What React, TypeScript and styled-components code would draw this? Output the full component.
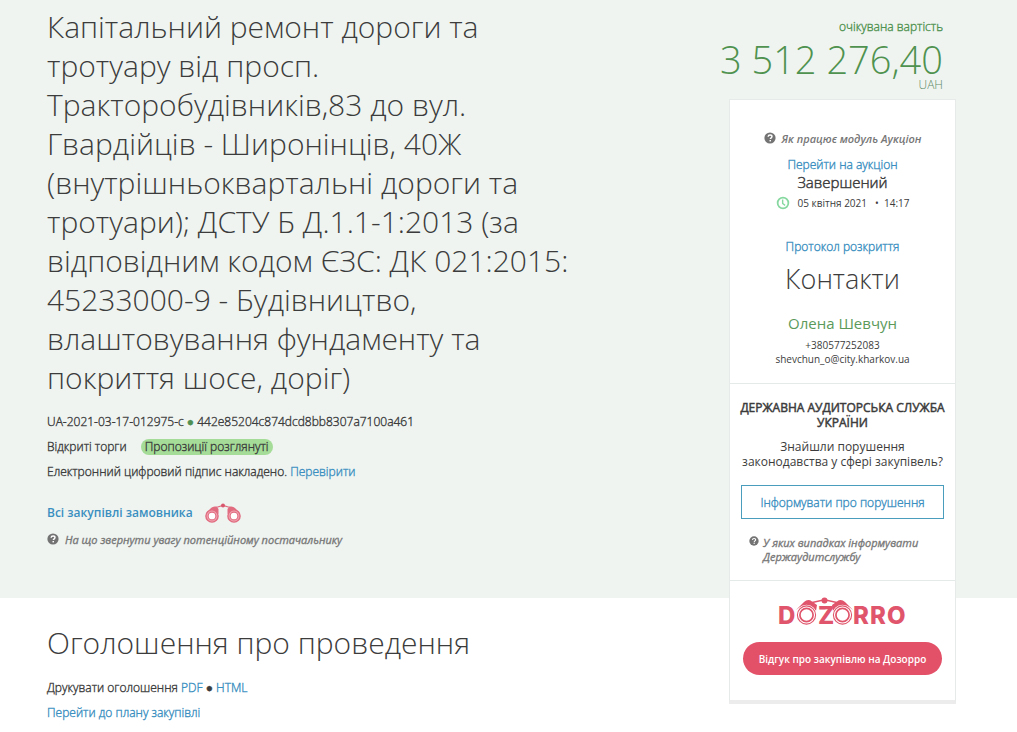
import React from "react";
import styled, { createGlobalStyle, css } from "styled-components";

const GlobalStyle = createGlobalStyle`
  *, *::before, *::after { box-sizing: border-box; }
  body {
    margin: 0;
    background: #fff;
    color: #3c3c3c;
    font: 300 12px/20px "Open Sans", "Noto Sans", sans-serif;
  }
`;

/* light text that has to stay readable at small sizes */
const smallLight = css`
  font-weight: 300;
  -webkit-text-stroke: 0.03em;
`;

const Page = styled.div`
  display: grid;
  grid-template-columns: minmax(0, 1fr) 227px;
  grid-template-rows: auto 1fr;
  column-gap: 160px;
  padding: 0 61px 0 47px;
`;

const HeroBand = styled.div`
  grid-area: 1 / 1 / 2 / 3;
  margin: 0 -61px 0 -47px;
  background: #eff4f1;
`;

const Hero = styled.header`
  grid-area: 1 / 1;
  padding: 7px 0 47px;
`;

const Title = styled.h1`
  margin: 0 0 15px;
  font-size: 30px;
  line-height: 39px;
  font-weight: 300;
`;

const Line = styled.p`
  ${smallLight}
  margin: 0 0 5px;
`;

const Link = styled.a`
  ${smallLight}
  color: #3a8fc0;
  text-decoration: none;
`;

const BuyerLink = styled.a`
  color: #3a8fc0;
  font-weight: 600;
  text-decoration: none;
`;

const Bullet = styled.span<{ $green?: boolean }>`
  color: ${(p) => (p.$green ? "#4f8f52" : "inherit")};
`;

const Status = styled.span`
  display: inline-block;
  margin-left: 11px;
  padding: 0 4px;
  border-radius: 8px;
  background: #a4dc98;
  line-height: 16px;
`;

const BuyerRow = styled.div`
  display: flex;
  align-items: center;
  gap: 12px;
  margin: 19px 0 6px;
  height: 24px;
`;

const Hint = styled.a<{ $inset?: boolean; $strong?: boolean }>`
  display: inline-flex;
  align-items: flex-start;
  gap: ${(p) => (p.$inset ? "4px" : "6px")};
  padding-left: ${(p) => (p.$inset ? "8px" : "0")};
  color: #777;
  font-size: 11px;
  line-height: 14px;
  font-style: italic;
  font-weight: ${(p) => (p.$strong ? 600 : 400)};
  -webkit-text-stroke: ${(p) => (p.$strong ? "0" : "0.03em")};
  text-align: left;
  text-decoration: none;
  svg { flex: none; }
`;

const Announcement = styled.section`
  grid-area: 2 / 1;
  padding: 25px 0 8px;
`;

const SectionTitle = styled.h2`
  margin: 0 0 15px;
  font-size: 30px;
  line-height: 40px;
  font-weight: 300;
`;

const Aside = styled.aside`
  grid-area: 1 / 2 / 3 / 3;
`;

const Price = styled.div`
  padding: 17px 13px 6px 0;
  display: flex;
  flex-direction: column;
  align-items: flex-end;
  color: #4f924f;
  white-space: nowrap;
`;

const PriceLabel = styled.span`
  ${smallLight}
`;

const Amount = styled.strong`
  font-size: 38px;
  line-height: 44px;
  font-weight: 300;
  margin-bottom: -4px;
`;

const Currency = styled.span`
  color: #5f8a66;
  line-height: 16px;
`;

const Card = styled.div`
  background: #fff;
  border: 1px solid #e6eae8;
  border-bottom: 4px solid #ececec;
  text-align: center;
`;

const CardPart = styled.section<{ $pad: string }>`
  padding: ${(p) => p.$pad};
  & + & { border-top: 1px solid #e4eae7; }
`;

const AuctionLink = styled.div`
  margin-top: 5px;
`;

const State = styled.div`
  ${smallLight}
  font-size: 15px;
  line-height: 14px;
`;

const Time = styled.div`
  display: flex;
  align-items: center;
  justify-content: center;
  gap: 8px;
  margin: 4px 0 24px;
  font-size: 10px;
  line-height: 20px;
  font-weight: 400;
`;

const ContactsTitle = styled.h3`
  margin: 4px 0 16px;
  font-size: 27px;
  line-height: 36px;
  font-weight: 300;
`;

const Person = styled.div`
  margin-bottom: 5px;
  color: #5b9a5b;
  font-size: 15px;
  line-height: 20px;
  font-weight: 400;
`;

const Small = styled.div`
  font-size: 10px;
  line-height: 14px;
  font-weight: 400;
`;

const AuditTitle = styled.h4`
  margin: 0 -4px 9px;
  font-size: 12px;
  line-height: 15px;
  font-weight: 400;
  -webkit-text-stroke: 0.04em;
`;

const AuditText = styled.p`
  margin: 0 0 16px;
  line-height: 15px;
  font-weight: 400;
`;

const buttonBase = css`
  display: block;
  width: 100%;
  padding: 0;
  font-family: inherit;
  cursor: pointer;
`;

const OutlineButton = styled.button`
  ${buttonBase}
  ${smallLight}
  height: 34px;
  margin-bottom: 13px;
  border: 1px solid #4a9dbd;
  background: #fff;
  color: #3a8fc0;
  font-size: 12px;
`;

const ReviewButton = styled.button`
  ${buttonBase}
  height: 33px;
  margin-top: 9px;
  border: 0;
  border-radius: 17px;
  background: #e35168;
  color: #fff;
  font-size: 10px;
  font-weight: 600;
`;

const Logo = styled.svg`
  display: block;
  margin: 0 auto;
`;

const QuestionIcon = ({ size = 12 }: { size?: number }) => (
  <svg width={size} height={size} viewBox="0 0 12 12" aria-hidden="true">
    <circle cx="6" cy="6" r="5.6" fill="#737373" />
    <path d="M4.1 4.7C4.2 3.5 5 3 6.1 3c1.2 0 1.9.7 1.9 1.6 0 1.2-1.7 1.3-1.7 2.5" fill="none" stroke="#fff" strokeWidth="1.4" />
    <rect x="5.5" y="8" width="1.5" height="1.4" fill="#fff" />
  </svg>
);

const ClockIcon = () => (
  <svg width="14" height="14" viewBox="0 0 12 12" aria-hidden="true">
    <circle cx="6" cy="6" r="4.6" fill="none" stroke="#86d8a0" strokeWidth="1.5" />
    <path d="M5.7 3v3.4l2.1 1.6" fill="none" stroke="#86d8a0" strokeWidth="1.2" />
  </svg>
);

const Binoculars = () => (
  <svg width="36" height="20" viewBox="0 0 36 20" aria-hidden="true">
    <path d="M1.5 10 6 5Q8 2.8 11.5 3.6L13.5 6 13.5 11Q7 4 1.5 10ZM34.5 10 30 5Q28 2.8 24.5 3.6L22.5 6 22.5 11Q29 4 34.5 10Z" fill="#e16c80" />
    <path d="M11 4.500 18 2.400l7 2.100" fill="none" stroke="#e16c80" strokeWidth="1.3" />
    <circle cx="18" cy="2.6" r="2" fill="#d9576d" />
    <g stroke="#e16c80">
      <circle cx="7" cy="13" r="6.1" fill="#f2a9b4" strokeWidth="1.4" />
      <circle cx="29" cy="13" r="6.1" fill="#f2a9b4" strokeWidth="1.4" />
      <circle cx="7" cy="13" r="3.9" fill="#fff" strokeWidth="1.1" />
      <circle cx="29" cy="13" r="3.9" fill="#fff" strokeWidth="1.1" />
    </g>
  </svg>
);

const DozorroLogo = () => (
  <Logo width="132" height="36" viewBox="-2 0 132 36" role="img" aria-label="DOZORRO">
    <g fill="#e0556b" fontFamily="Inter, sans-serif" fontWeight="800" fontSize="24">
      <text x="-1" y="27">D</text>
      <text x="39" y="27">Z</text>
      <text x="74" y="27">R</text>
      <text x="91" y="27">R</text>
      <text x="108" y="27">O</text>
    </g>
    <path d="M17 13 25 5Q29 1.500 33 4.500L38 8 37 14Q27 4 17 13ZM74 13 66 5Q62 1.500 58 4.500L53 8 54 14Q64 4 74 13Z" fill="#e0556b" />
    <path d="M31 6 45.500 2.700 60 6" fill="none" stroke="#e0556b" strokeWidth="1.4" />
    <circle cx="45.5" cy="3.4" r="3" fill="#e0556b" />
    <g fill="#fff" stroke="#e0556b">
      <circle cx="27.5" cy="18" r="9.3" stroke="#fff" strokeWidth="2" />
      <circle cx="63.5" cy="18" r="9.3" stroke="#fff" strokeWidth="2" />
      <circle cx="27.5" cy="18" r="9.1" strokeWidth="1.1" />
      <circle cx="63.5" cy="18" r="9.1" strokeWidth="1.1" />
      <circle cx="27.5" cy="18" r="6.6" strokeWidth="1.7" />
      <circle cx="63.5" cy="18" r="6.6" strokeWidth="1.7" />
    </g>
  </Logo>
);

export default function App() {
  return (
    <>
      <GlobalStyle />
      <Page>
        <HeroBand />
        <Hero>
          <Title>
            Капітальний ремонт дороги та тротуару від просп. Тракторобудівників,83 до вул. Гвардійців - Широнінців, 40Ж
            (внутрішньоквартальні дороги та тротуари); ДСТУ Б Д.1.1-1:2013 (за відповідним кодом ЄЗС: ДК 021:2015:
            45233000-9 - Будівництво, влаштовування фундаменту та покриття шосе, доріг)
          </Title>
          <Line>
            UA-2021-03-17-012975-c <Bullet $green>●</Bullet> 442e85204c874dcd8bb8307a7100a461
          </Line>
          <Line>
            Відкриті торги <Status>Пропозиції розглянуті</Status>
          </Line>
          <Line>
            Електронний цифровий підпис накладено. <Link href="#verify">Перевірити</Link>
          </Line>
          <BuyerRow>
            <BuyerLink href="#buyer">Всі закупівлі замовника</BuyerLink>
            <Binoculars />
          </BuyerRow>
          <Hint href="#supplier-hints">
            <QuestionIcon />
            На що звернути увагу потенційному постачальнику
          </Hint>
        </Hero>
        <Announcement>
          <SectionTitle>Оголошення про проведення</SectionTitle>
          <Line>
            Друкувати оголошення <Link href="#pdf">PDF</Link> <Bullet>●</Bullet> <Link href="#html">HTML</Link>
          </Line>
          <Line>
            <Link href="#plan">Перейти до плану закупівлі</Link>
          </Line>
        </Announcement>
        <Aside>
          <Price>
            <PriceLabel>очікувана вартість</PriceLabel>
            <Amount>3 512 276,40</Amount>
            <Currency>UAH</Currency>
          </Price>
          <Card>
            <CardPart $pad="30px 12px 17px">
              <Hint $strong href="#auction-help">
                <QuestionIcon />
                Як працює модуль Аукціон
              </Hint>
              <AuctionLink>
                <Link href="#auction">Перейти на аукціон</Link>
              </AuctionLink>
              <State>Завершений</State>
              <Time>
                <ClockIcon />
                <span>05 квітня 2021</span>
                <span>•&nbsp; 14:17</span>
              </Time>
              <Link href="#protocol">Протокол розкриття</Link>
              <ContactsTitle>Контакти</ContactsTitle>
              <Person>Олена Шевчун</Person>
              <Small>+380577252083</Small>
              <Small>shevchun_o@city.kharkov.ua</Small>
            </CardPart>
            <CardPart $pad="16px 11px 16px">
              <AuditTitle>ДЕРЖАВНА АУДИТОРСЬКА СЛУЖБА УКРАЇНИ</AuditTitle>
              <AuditText>Знайшли порушення законодавства у сфері закупівель?</AuditText>
              <OutlineButton type="button">Інформувати про порушення</OutlineButton>
              <Hint $inset href="#audit-help">
                <QuestionIcon size={10} />
                <span>У яких випадках інформувати Держаудитслужбу</span>
              </Hint>
            </CardPart>
            <CardPart $pad="16px 13px 25px">
              <DozorroLogo />
              <ReviewButton type="button">Відгук про закупівлю на Дозорро</ReviewButton>
            </CardPart>
          </Card>
        </Aside>
      </Page>
    </>
  );
}
